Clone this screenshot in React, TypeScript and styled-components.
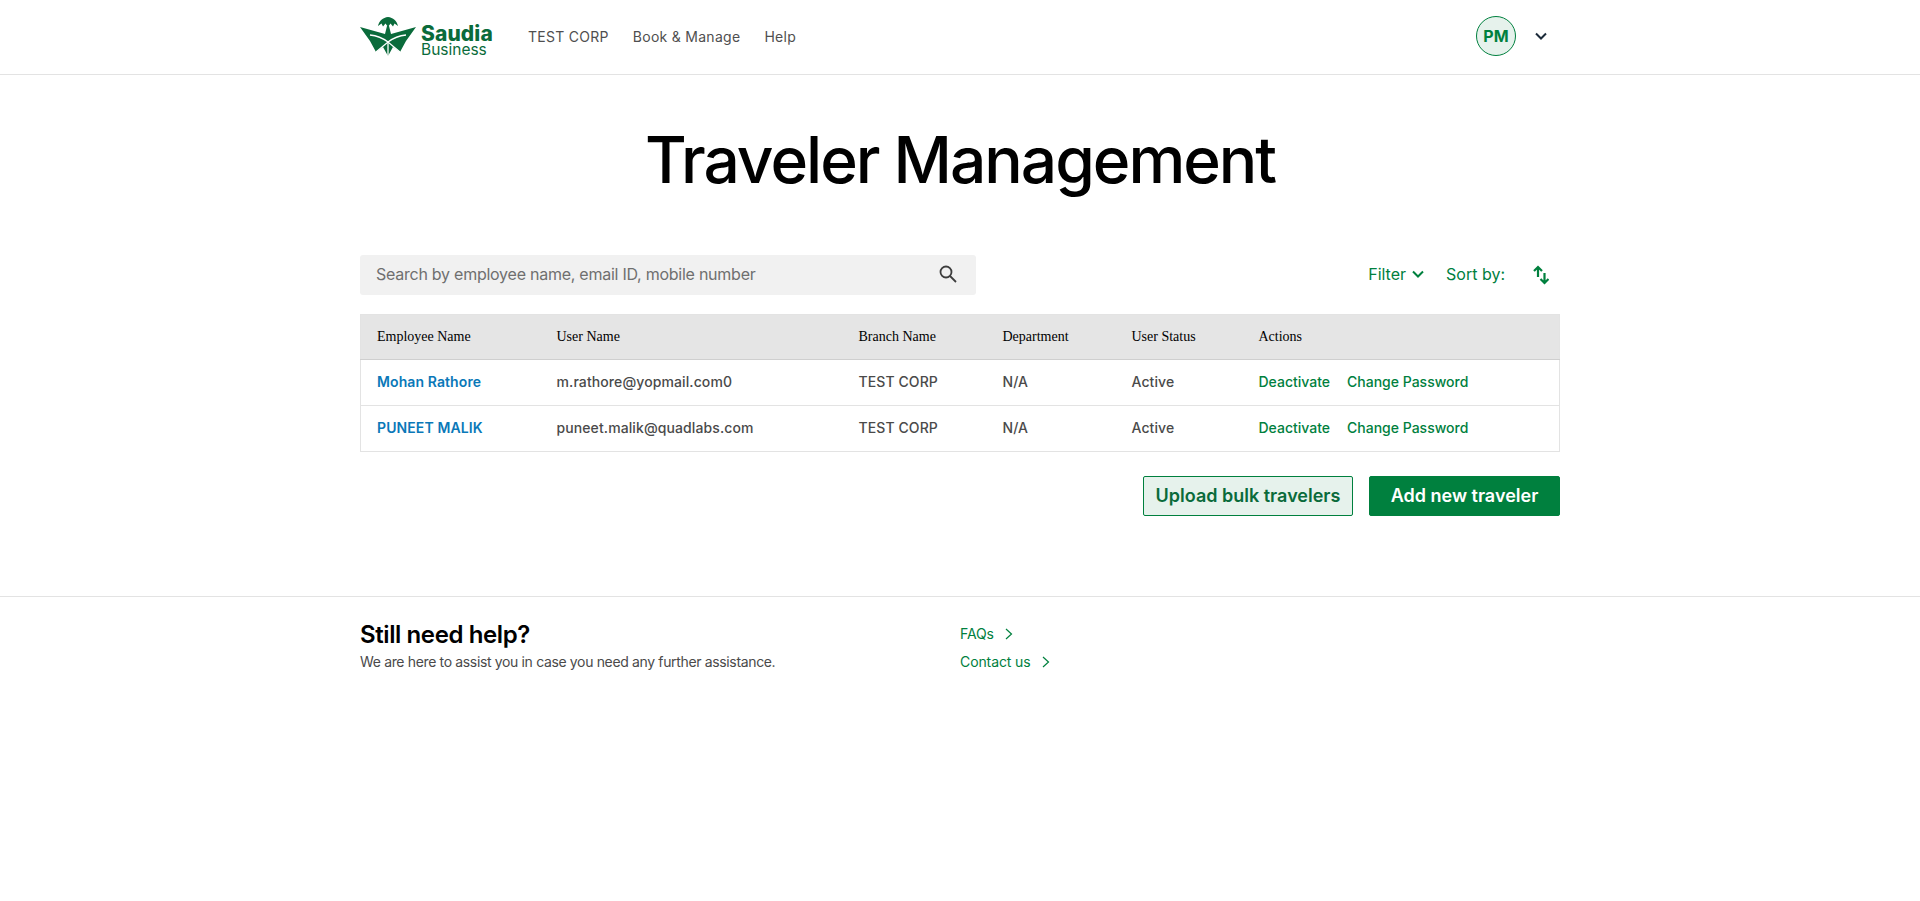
import React from 'react';
import styled, { createGlobalStyle } from 'styled-components';

const GREEN = '#00803e';
const SANS = '"Inter", "Liberation Sans", sans-serif';

const GlobalStyle = createGlobalStyle`
  html, body {
    margin: 0;
    padding: 0;
    background: #fff;
    font-family: ${SANS};
    color: #4a4a4a;
  }
  * { box-sizing: border-box; }
`;

const Container = styled.div`
  width: 1200px;
  margin: 0 auto;
`;

const Header = styled.header`
  height: 75px;
  border-bottom: 1px solid #e3e3e3;
`;

const HeaderInner = styled(Container)`
  height: 100%;
  display: flex;
  align-items: center;
`;

const Logo = styled.a`
  display: flex;
  align-items: center;
  gap: 5px;
  width: 168px;
  color: #0a6b3b;
`;

const LogoWords = styled.div`
  display: flex;
  flex-direction: column;
  margin-top: 7px;
`;

const LogoName = styled.span`
  font-size: 21px;
  font-weight: 800;
  line-height: 18px;
  letter-spacing: 0.1px;
`;

const LogoSub = styled.span`
  font-size: 15.5px;
  font-weight: 400;
  line-height: 14px;
`;

const Nav = styled.nav`
  display: flex;
  gap: 24px;
  margin-bottom: 2px;
  font-size: 14px;
  letter-spacing: 0.28px;
  color: #4f4f4f;
`;

const Profile = styled.div`
  margin-left: auto;
  margin-right: 12px;
  margin-bottom: 2px;
  display: flex;
  align-items: center;
  gap: 18px;
`;

const Avatar = styled.div`
  width: 40px;
  height: 40px;
  border-radius: 50%;
  border: 1px solid ${GREEN};
  background: #e6f2ec;
  color: ${GREEN};
  font-size: 16px;
  font-weight: 700;
  display: flex;
  align-items: center;
  justify-content: center;
`;

const Title = styled.h1`
  margin: 41px 0 0;
  height: 139px;
  text-align: center;
  font-size: 64px;
  line-height: 88px;
  font-weight: 500;
  letter-spacing: -2px;
  color: #000;
`;

const Toolbar = styled.div`
  display: flex;
  align-items: center;
  justify-content: space-between;
  height: 40px;
`;

const Search = styled.div`
  width: 616px;
  height: 40px;
  padding: 0 18px 2px 16px;
  display: flex;
  align-items: center;
  justify-content: space-between;
  background: #f1f1f1;
  border-radius: 3px;
  color: #6f6f6f;
  font-size: 16px;
  letter-spacing: -0.25px;
`;

const Tools = styled.div`
  display: flex;
  align-items: center;
  color: ${GREEN};
  font-size: 16px;
`;

const FilterLabel = styled.span`
  display: flex;
  align-items: center;
  gap: 5px;
  margin-right: 21px;
  padding-bottom: 2px;
`;

const SortLabel = styled.span`
  padding-bottom: 2px;
`;

const SortIcon = styled.span`
  display: flex;
  margin-left: 28px;
  margin-right: 11px;
`;

const Table = styled.table`
  width: 1200px;
  margin-top: 19px;
  border-collapse: collapse;
  table-layout: fixed;
  border: 1px solid #e3e3e3;
`;

const HeadCell = styled.th<{ $w?: number }>`
  width: ${p => (p.$w ? `${p.$w}px` : 'auto')};
  height: 45px;
  padding: 0 0 0 16px;
  background: #e5e5e5;
  border-bottom: 1px solid #cfcfcf;
  text-align: left;
  font-family: "Liberation Serif", serif;
  font-size: 14px;
  font-weight: 400;
  color: #000;
`;

const Cell = styled.td`
  height: 46px;
  padding: 0 0 3px 16px;
  border-bottom: 1px solid #e3e3e3;
  font-size: 14px;
  font-weight: 500;
  letter-spacing: 0.1px;
  color: #4a4a4a;
`;

const NameLink = styled.a`
  color: #0a78b8;
  font-weight: 600;
`;

const ActionLink = styled.a<{ $gap?: boolean }>`
  color: ${GREEN};
  letter-spacing: 0;
  margin-left: ${p => (p.$gap ? '17px' : '0')};
`;

const ButtonRow = styled.div`
  display: flex;
  justify-content: flex-end;
  gap: 16px;
  margin-top: 24px;
`;

const Button = styled.button<{ $solid?: boolean }>`
  height: 40px;
  padding: 0 0 2px;
  width: ${p => (p.$solid ? '191px' : '210px')};
  border: 1px solid ${GREEN};
  border-radius: 2px;
  background: ${p => (p.$solid ? GREEN : '#e6f2ec')};
  color: ${p => (p.$solid ? '#fff' : '#0a6b3b')};
  font-family: ${SANS};
  font-size: 18px;
  font-weight: 600;
`;

const Footer = styled.footer`
  margin-top: 80px;
  border-top: 1px solid #e3e3e3;
`;

const FooterInner = styled(Container)`
  display: grid;
  grid-template-columns: 600px 1fr;
  padding-top: 23px;
`;

const HelpTitle = styled.h2`
  margin: 0;
  font-size: 24px;
  line-height: 30px;
  font-weight: 600;
  letter-spacing: -0.4px;
  color: #000;
`;

const HelpText = styled.p`
  margin: 2px 0 0;
  font-size: 14px;
  line-height: 20px;
  letter-spacing: -0.35px;
`;

const HelpLinks = styled.div`
  display: flex;
  flex-direction: column;
  gap: 8px;
  padding-top: 4px;
`;

const HelpLink = styled.a`
  display: flex;
  align-items: center;
  gap: 10px;
  font-size: 14px;
  line-height: 20px;
  letter-spacing: -0.1px;
  color: ${GREEN};
`;

const Chevron = ({ color, size = 14, width = 2 }: { color: string; size?: number; width?: number }) => (
  <svg width={size} height={size} viewBox="0 0 14 14" fill="none" stroke={color} strokeWidth={width}>
    <path d="M2 4.5 7 9.5 12 4.5" />
  </svg>
);

const ChevronRight = () => (
  <svg width="10" height="12" viewBox="0 0 10 12" fill="none" stroke={GREEN} strokeWidth="1.2">
    <path d="M2 1 7.5 6 2 11" />
  </svg>
);

const SaudiaMark = () => (
  <svg width="56" height="40" viewBox="0 0 56 40">
    <path
      d="M0 10 25 17 27 9H29L31 17 56 10 46 24 40 35 33 30 28 39 23 30 16 35 10 24Z"
      fill="#0a6b3b"
    />
    <path
      d="M18 9C19 4 23 .5 28 0C33 .5 37 4 38 9L34.500 6.500 33 9.500 30.500 6.500 28 10 25.500 6.500 23 9.500 21.500 6.500Z"
      fill="#0a6b3b"
    />
    <g fill="none" stroke="#fff" strokeWidth="1.3">
      <path d="M10 18Q20 19 28 25Q36 19 46 18" />
      <path d="M16 35 28 25 40 35" />
      <path d="M28 25V39" />
    </g>
  </svg>
);

const SearchIcon = () => (
  <svg width="20" height="20" viewBox="0 0 20 20" fill="none" stroke="#3d3d3d" strokeWidth="1.8">
    <circle cx="8" cy="8" r="5.500" />
    <path d="M12 12 18 18" />
  </svg>
);

const SortArrows = () => (
  <svg width="16" height="20" viewBox="0 0 16 20" fill="none" stroke={GREEN} strokeWidth="2.2">
    <path d="M5 12V2M1 6 5 2 9 6" />
    <path d="M11.500 8V18M7.500 14 11.500 18 15.500 14" />
  </svg>
);

const travelers = [
  { name: 'Mohan Rathore', user: 'm.rathore@yopmail.com0' },
  { name: 'PUNEET MALIK', user: 'puneet.malik@quadlabs.com' },
];

const columns: [string, number?][] = [
  ['Employee Name', 180],
  ['User Name', 302],
  ['Branch Name', 144],
  ['Department', 129],
  ['User Status', 127],
  ['Actions'],
];

export default function App() {
  return (
    <>
      <GlobalStyle />
      <Header>
        <HeaderInner>
          <Logo>
            <SaudiaMark />
            <LogoWords>
              <LogoName>Saudia</LogoName>
              <LogoSub>Business</LogoSub>
            </LogoWords>
          </Logo>
          <Nav>
            <span>TEST CORP</span>
            <span>Book &amp; Manage</span>
            <span>Help</span>
          </Nav>
          <Profile>
            <Avatar>PM</Avatar>
            <Chevron color="#1c2b3a" />
          </Profile>
        </HeaderInner>
      </Header>
      <Container>
        <Title>Traveler Management</Title>
        <Toolbar>
          <Search>
            <span>Search by employee name, email ID, mobile number</span>
            <SearchIcon />
          </Search>
          <Tools>
            <FilterLabel>
              Filter <Chevron color={GREEN} />
            </FilterLabel>
            <SortLabel>Sort by:</SortLabel>
            <SortIcon>
              <SortArrows />
            </SortIcon>
          </Tools>
        </Toolbar>
        <Table>
          <thead>
            <tr>
              {columns.map(([label, w]) => (
                <HeadCell key={label} $w={w}>
                  {label}
                </HeadCell>
              ))}
            </tr>
          </thead>
          <tbody>
            {travelers.map(t => (
              <tr key={t.user}>
                <Cell>
                  <NameLink>{t.name}</NameLink>
                </Cell>
                <Cell>{t.user}</Cell>
                <Cell>TEST CORP</Cell>
                <Cell>N/A</Cell>
                <Cell>Active</Cell>
                <Cell>
                  <ActionLink>Deactivate</ActionLink>
                  <ActionLink $gap>Change Password</ActionLink>
                </Cell>
              </tr>
            ))}
          </tbody>
        </Table>
        <ButtonRow>
          <Button>Upload bulk travelers</Button>
          <Button $solid>Add new traveler</Button>
        </ButtonRow>
      </Container>
      <Footer>
        <FooterInner>
          <div>
            <HelpTitle>Still need help?</HelpTitle>
            <HelpText>We are here to assist you in case you need any further assistance.</HelpText>
          </div>
          <HelpLinks>
            <HelpLink>
              FAQs <ChevronRight />
            </HelpLink>
            <HelpLink>
              Contact us <ChevronRight />
            </HelpLink>
          </HelpLinks>
        </FooterInner>
      </Footer>
    </>
  );
}
